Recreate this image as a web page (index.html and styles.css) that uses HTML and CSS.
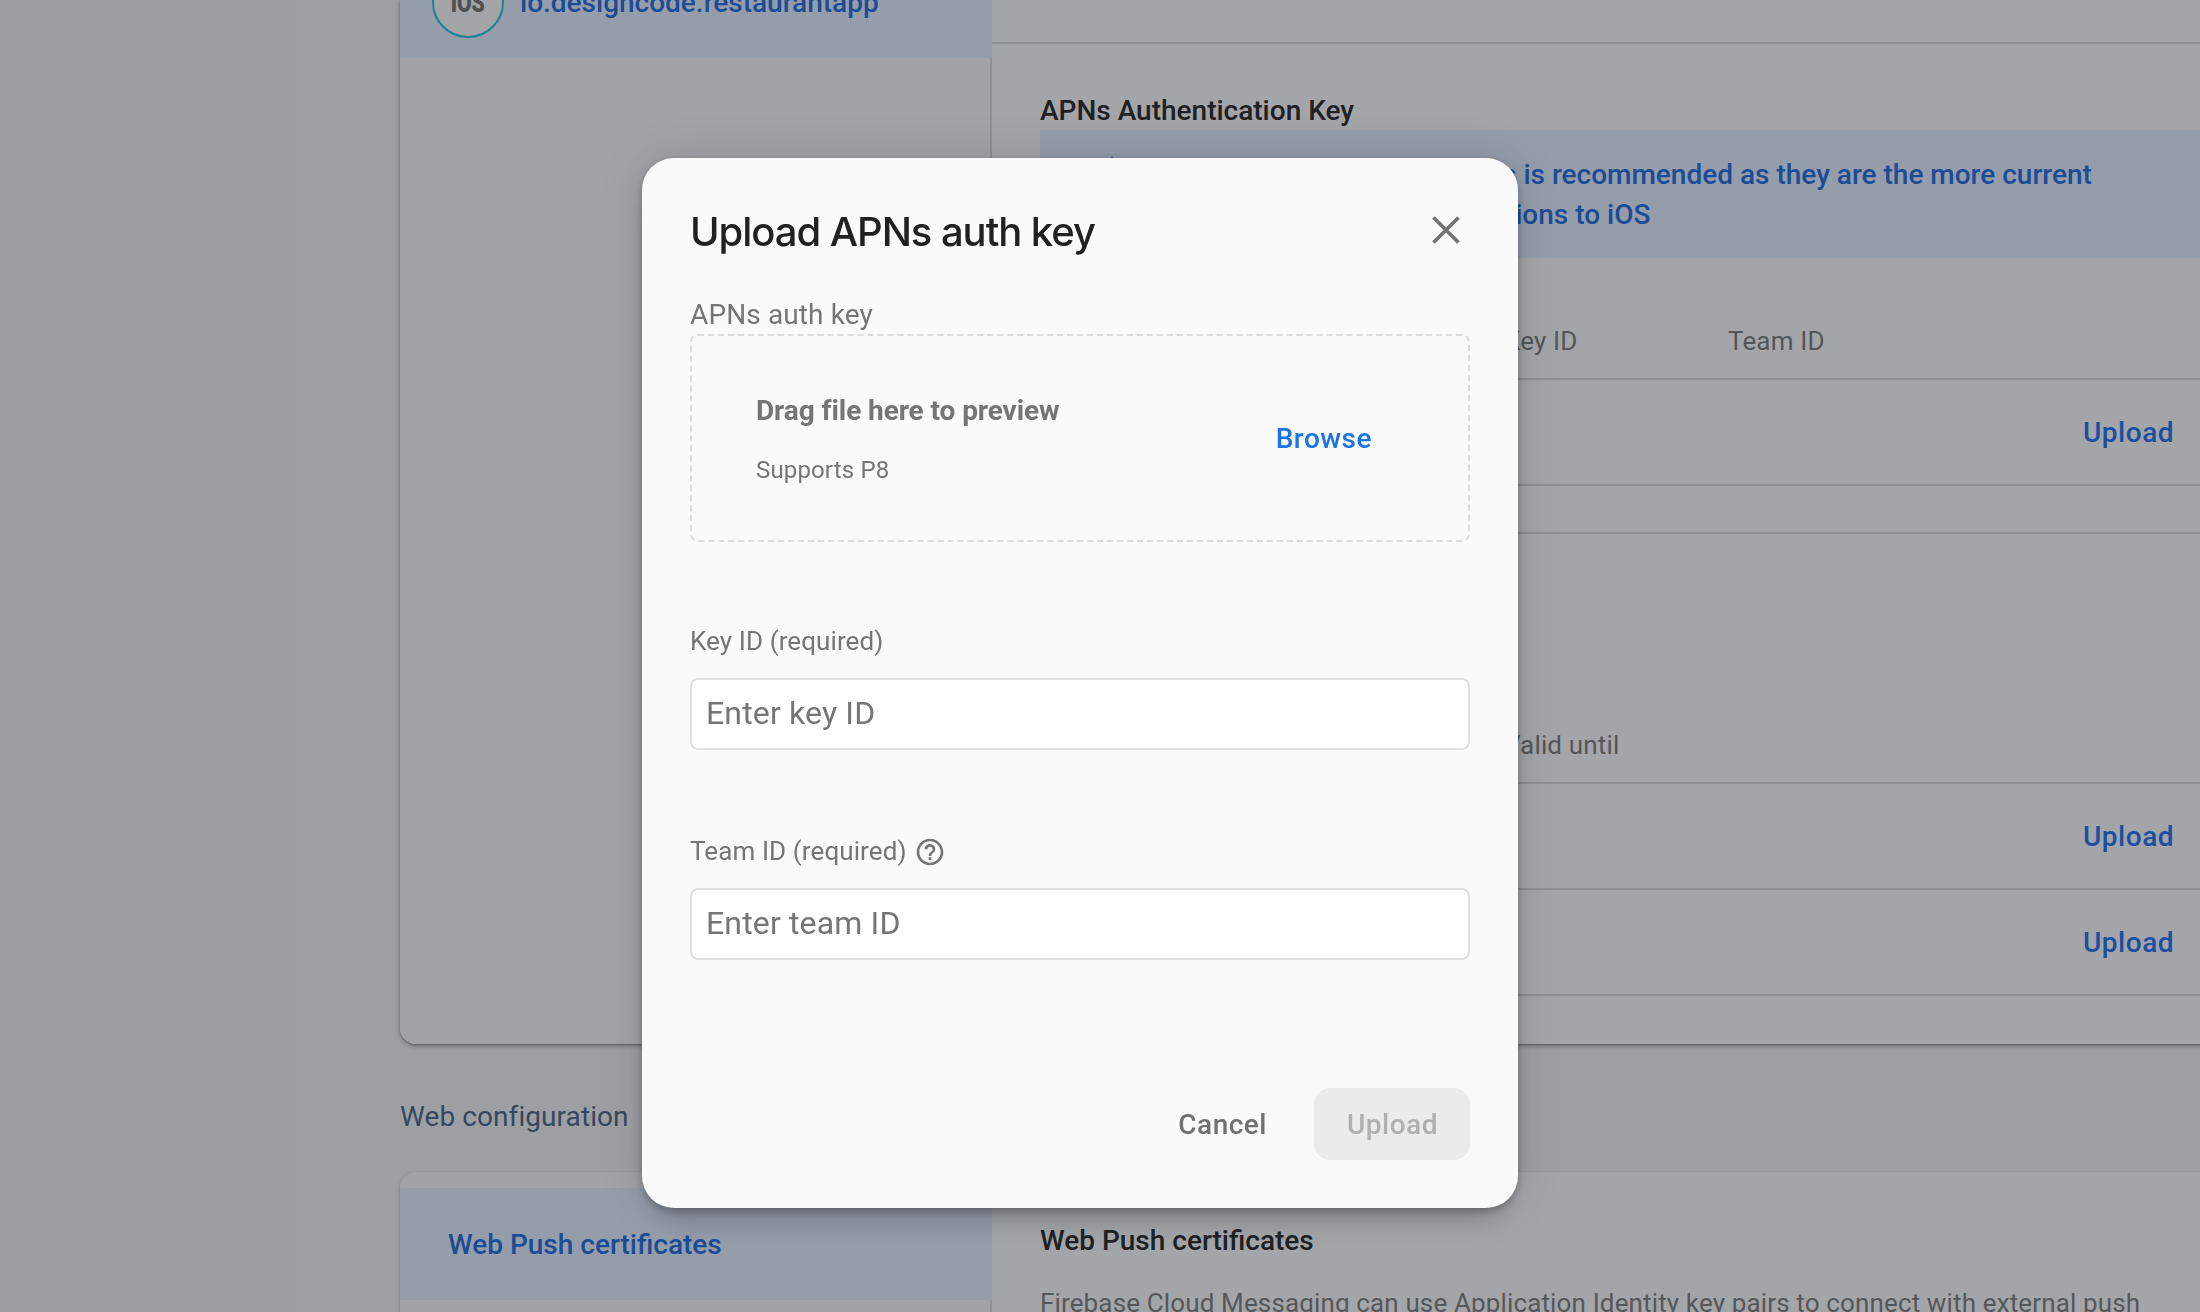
FILE: index.html
```html
<!DOCTYPE html>
<html lang="en">
<head>
<meta charset="utf-8">
<title>Cloud Messaging settings</title>
<link rel="stylesheet" href="styles.css">
</head>
<body>
<main class="page">
  <section class="card card-ios">
    <nav class="side">
      <div class="side-item app-item">
        <span class="app-badge"><b>iOS</b></span>
        <span class="app-name">io.designcode.restaurantapp</span>
      </div>
    </nav>
    <div class="detail">
      <div class="detail-head"></div>
      <div class="block">
        <h3 class="block-title">APNs Authentication Key</h3>
        <div class="notice">
          <svg class="notice-icon" viewBox="0 0 24 24"><path d="M22 9.240l-7.190-.62L12 2 9.190 8.630 2 9.240l5.460 4.730L5.820 21 12 17.270 18.180 21l-1.630-7.030L22 9.240z"/></svg>
          <p>Configuration with auth keys is recommended as they are the more current<br>method for sending notifications to iOS</p>
        </div>
        <div class="row row-head key-head"><span>File</span><span>Key ID</span><span>Team ID</span></div>
        <div class="row"><button class="link">Upload</button></div>
      </div>
      <div class="block block-certs">
        <div class="row row-head cert-head"><span>File</span><span>Valid until</span></div>
        <div class="row"><button class="link">Upload</button></div>
        <div class="row"><button class="link">Upload</button></div>
      </div>
    </div>
  </section>

  <h2 class="section-title">Web configuration</h2>

  <section class="card card-web">
    <nav class="side side-web">
      <div class="side-item web-item">Web Push certificates</div>
    </nav>
    <div class="detail detail-web">
      <h3 class="block-title">Web Push certificates</h3>
      <p class="copy">Firebase Cloud Messaging can use Application Identity key pairs to connect with external push</p>
    </div>
  </section>
</main>

<div class="overlay">
  <form class="dialog">
    <header class="dialog-head">
      <h1 class="dialog-title">Upload APNs auth key</h1>
      <svg class="close" viewBox="0 0 28 28"><path d="M1.5 1.5l25 25M26.500 1.500l-25 25"/></svg>
    </header>
    <div class="drop-label">APNs auth key</div>
    <div class="dropzone">
      <div>
        <div class="drop-title">Drag file here to preview</div>
        <div class="drop-hint">Supports P8</div>
      </div>
      <button type="button" class="browse">Browse</button>
    </div>
    <label class="field-label" for="key">Key ID (required)</label>
    <input class="field" id="key" placeholder="Enter key ID">
    <label class="field-label team-label" for="team">Team ID (required)
      <svg class="help" viewBox="0 0 24 24"><path d="M11 18h2v-2h-2v2zm1-16C6.480 2 2 6.480 2 12s4.480 10 10 10 10-4.480 10-10S17.520 2 12 2zm0 18c-4.410 0-8-3.590-8-8s3.590-8 8-8 8 3.590 8 8-3.590 8-8 8zm0-14c-2.210 0-4 1.790-4 4h2c0-1.100.9-2 2-2s2 .9 2 2c0 2-3 1.750-3 5h2c0-2.250 3-2.500 3-5 0-2.210-1.790-4-4-4z"/></svg>
    </label>
    <input class="field" id="team" placeholder="Enter team ID">
    <footer class="actions">
      <button type="button" class="btn btn-cancel">Cancel</button>
      <button type="button" class="btn btn-upload" disabled>Upload</button>
    </footer>
  </form>
</div>
</body>
</html>
```
FILE: styles.css
```css
* { box-sizing: border-box; margin: 0; padding: 0; }

body {
  height: 1312px;
  overflow: hidden;
  background: #9b9fa3;
  font-family: Roboto, "Liberation Sans", sans-serif;
  font-size: 28px;
  line-height: 40px;
  color: #202124;
}

button { border: 0; background: none; font: inherit; }

.page {
  width: 2200px;
  height: 1312px;
  padding-left: 400px;
  overflow: hidden;
  background: linear-gradient(90deg, #9a9ea3 0, #9ca0a4 400px);
}

.card {
  display: grid;
  grid-template-columns: 592px 1fr;
  margin-right: -80px;
  background: #a4a5a8;
  box-shadow: 0 2px 5px rgba(0, 0, 0, .3), 0 1px 2px rgba(0, 0, 0, .2);
}

.card-ios { height: 1044px; border-radius: 0 0 16px 16px; }
.card-web { height: 240px; border-radius: 16px 16px 0 0; box-shadow: 0 1px 3px rgba(0, 0, 0, .3); }

.side {
  background: #a2a3a6;
  border-right: 2px solid #8f9194;
  border-radius: inherit;
}

.side-item {
  display: flex;
  width: 592px;
  background: #959caa;
  color: #1c4c96;
  font-weight: 500;
}

.app-item { height: 58px; padding: 0 32px 20px; gap: 16px; align-items: flex-end; }
.app-name { line-height: 70px; }

.app-badge {
  flex: none;
  width: 72px;
  height: 72px;
  border: 2px solid #1c8098;
  border-radius: 50%;
  background: #a3a4a7;
  color: #4f5052;
  line-height: 70px;
  text-align: center;
}

.app-badge b { display: block; font-weight: 900; transform: scaleX(.76); }

.side-web { padding-top: 16px; }
.web-item { height: 112px; padding: 2px 0 0 48px; align-items: center; }

.detail-head { height: 44px; border-bottom: 2px solid #8f9194; }
.block { padding: 46px 0 46px 48px; border-bottom: 2px solid #8f9194; }
.block-title { height: 40px; font-size: 28px; font-weight: 500; line-height: 42px; }

.notice {
  display: flex;
  gap: 24px;
  height: 128px;
  padding: 25px 48px 0;
  background: #959caa;
  color: #1c4c96;
  font-weight: 500;
}

.notice-icon { flex: none; width: 48px; height: 48px; margin-top: -3px; fill: #1c4c96; }
.notice p { flex: none; }

.row {
  display: flex;
  justify-content: flex-end;
  align-items: center;
  height: 106px;
  padding: 2px 106px 0 0;
  border-bottom: 2px solid #8f9194;
}

.row-head {
  display: grid;
  justify-content: start;
  align-items: end;
  padding: 0 0 17px;
  color: #545558;
  font-size: 26px;
  letter-spacing: .15px;
}

.key-head { height: 122px; grid-template-columns: 464px 224px auto; }
.cert-head { height: 250px; grid-template-columns: 464px auto; }
.block-certs { padding-top: 0; padding-bottom: 0; border: 0; }
.link { color: #1c4f9f; font-weight: 500; letter-spacing: .5px; }

.section-title {
  height: 128px;
  padding-top: 53px;
  color: #37475e;
  font-size: 28px;
  font-weight: 400;
  letter-spacing: .08px;
}

.detail-web { padding: 48px 0 0 48px; }
.copy { padding-top: 23px; color: #56575a; font-size: 26px; letter-spacing: .14px; white-space: nowrap; }

/* The dialog floats above the dimmed page. */
.overlay {
  position: fixed;
  inset: 0;
  display: flex;
  justify-content: center;
  align-items: flex-start;
  padding: 158px 40px 0 0;
}

.dialog {
  display: flex;
  flex-direction: column;
  width: 876px;
  height: 1050px;
  padding: 48px;
  border-radius: 32px;
  background: #fafafa;
  color: #757575;
  box-shadow: 0 22px 30px -14px rgba(0, 0, 0, .2), 0 0 48px 0 rgba(0, 0, 0, .12), 0 3px 8px rgba(0, 0, 0, .25);
}

.dialog-head { display: flex; justify-content: space-between; height: 88px; }

.dialog-title {
  color: #212121;
  font-family: Inter, Roboto, sans-serif;
  font-size: 40px;
  font-weight: 480;
  letter-spacing: -1.05px;
  line-height: 52px;
}

.close {
  width: 28px;
  height: 28px;
  margin: 10px 10px 0 0;
  fill: none;
  stroke: #757575;
  stroke-width: 3.8;
}

.drop-label { height: 40px; letter-spacing: .12px; line-height: 42px; }

.dropzone {
  display: flex;
  justify-content: space-between;
  height: 208px;
  padding: 55px 96px 0 64px;
  border: 2px dashed #dcdcdc;
  border-radius: 8px;
}

.drop-title { font-weight: 700; letter-spacing: -.08px; }
.drop-hint { padding-top: 19px; font-size: 24px; letter-spacing: .15px; }
.browse { height: 40px; margin-top: 28px; color: #1a73e8; font-weight: 500; letter-spacing: .5px; }

.field-label {
  display: flex;
  gap: 8px;
  align-items: center;
  height: 40px;
  margin: 79px 0 17px;
  font-size: 26px;
  letter-spacing: .1px;
}

.team-label { gap: 7px; margin: 81px 0 17px; }
.help { width: 32px; height: 32px; margin-top: 1px; fill: #757575; }

.field {
  flex: none;
  width: 100%;
  height: 72px;
  padding: 0 14px 2px;
  border: 2px solid #e0e0e0;
  border-radius: 8px;
  background: #fff;
  font: 32px Roboto, sans-serif;
  letter-spacing: .15px;
}

.field::placeholder { color: #757575; }

.actions { display: flex; justify-content: flex-end; gap: 14px; margin-top: auto; }
.btn { height: 72px; padding: 2px 33px 0; border-radius: 16px; font-weight: 500; letter-spacing: .5px; }
.btn-cancel { color: #717171; }
.btn-upload { width: 156px; background: #ebebeb; color: #b0b0b0; }
```
